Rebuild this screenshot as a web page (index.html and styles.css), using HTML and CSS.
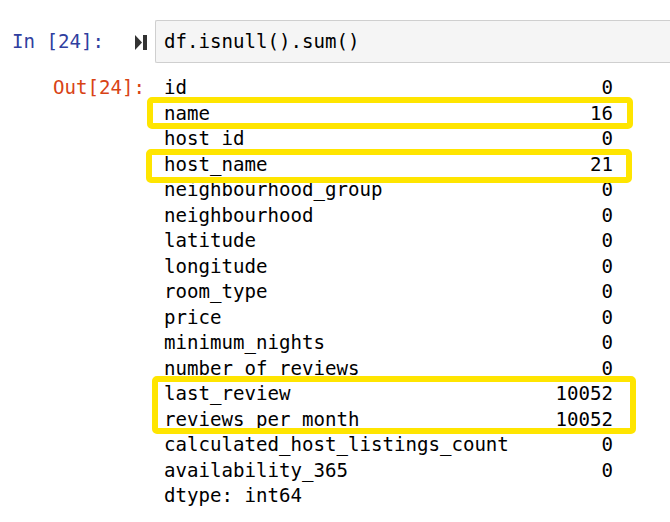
FILE: index.html
```html
<!DOCTYPE html>
<html>
<head>
<meta charset="utf-8">
<link rel="stylesheet" href="styles.css">
</head>
<body>
<div class="cell">
  <div class="in-row">
    <div class="prompt in-prompt">In [24]:</div>
    <div class="run-icon">
      <svg width="12" height="15" viewBox="0 0 12 15"><path d="M0 0 L7 7.5 L0 15 Z" fill="#333"/><rect x="8" y="0" width="4" height="15" fill="#333"/></svg>
    </div>
    <div class="input-box">df.isnull().sum()</div>
  </div>
  <div class="out-row">
    <div class="prompt out-prompt">Out[24]:</div>
    <div class="output">
      <span>id</span><span class="v">0</span>
      <span>name</span><span class="v">16</span>
      <span>host_id</span><span class="v">0</span>
      <span>host_name</span><span class="v">21</span>
      <span>neighbourhood_group</span><span class="v">0</span>
      <span>neighbourhood</span><span class="v">0</span>
      <span>latitude</span><span class="v">0</span>
      <span>longitude</span><span class="v">0</span>
      <span>room_type</span><span class="v">0</span>
      <span>price</span><span class="v">0</span>
      <span>minimum_nights</span><span class="v">0</span>
      <span>number_of_reviews</span><span class="v">0</span>
      <span>last_review</span><span class="v">10052</span>
      <span>reviews_per_month</span><span class="v">10052</span>
      <span>calculated_host_listings_count</span><span class="v">0</span>
      <span>availability_365</span><span class="v">0</span>
      <span>dtype: int64</span><span class="v"></span>
    </div>
  </div>
</div>
<div class="mark mark1"></div>
<div class="mark mark2"></div>
<div class="mark mark3"></div>
</body>
</html>
```
FILE: styles.css
```css
html, body {
  margin: 0;
  padding: 0;
  background: #ffffff;
}
body {
  font-family: "DejaVu Sans Mono", "Liberation Mono", monospace;
  font-size: 19.1px;
  color: #000;
  width: 670px;
  height: 522px;
  overflow: hidden;
  position: relative;
}
.cell {
  padding-top: 20px;
}
.in-row {
  display: flex;
  align-items: center;
  height: 43px;
}
.prompt {
  line-height: 25px;
  white-space: pre;
}
.in-prompt {
  color: #303F9F;
  width: 123px;
  padding-left: 12px;
  box-sizing: border-box;
}
.run-icon {
  width: 20px;
  padding-left: 12px;
  display: flex;
  align-items: center;
  padding-top: 2px;
}
.input-box {
  flex: 1;
  height: 43px;
  box-sizing: border-box;
  background: #f5f5f5;
  border: 1px solid #cfcfcf;
  border-right: none;
  border-radius: 2px 0 0 2px;
  padding-left: 8px;
  display: flex;
  align-items: center;
  white-space: pre;
}
.out-row {
  display: flex;
  margin-top: 12px;
}
.out-prompt {
  color: #D84315;
  width: 145px;
  text-align: right;
  margin-right: 19px;
}
.output {
  display: grid;
  grid-template-columns: 1fr auto;
  grid-template-rows: repeat(8, 25px 26px) 25px;
  width: 449px;
  line-height: 25px;
  white-space: pre;
}
.output span {
  display: flex;
  align-items: center;
}
.output .v {
  justify-content: flex-end;
}
.mark {
  position: absolute;
  border: 6px solid #FFE500;
  border-radius: 5px;
  box-sizing: border-box;
}
.mark1 {
  left: 147px;
  top: 97px;
  width: 486px;
  height: 32px;
}
.mark2 {
  left: 146px;
  top: 149px;
  width: 486px;
  height: 34px;
}
.mark3 {
  left: 152px;
  top: 376px;
  width: 484px;
  height: 58px;
}
```
